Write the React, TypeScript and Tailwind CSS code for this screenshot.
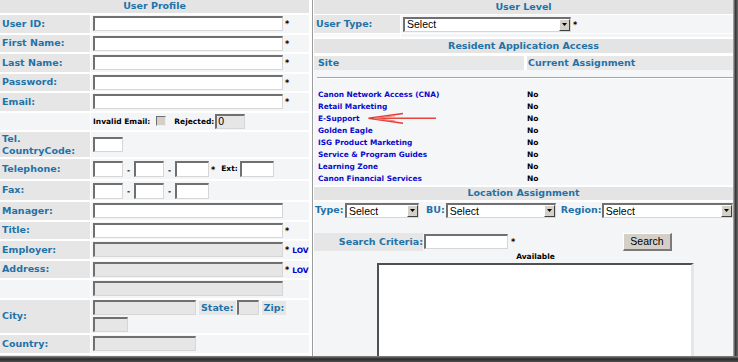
import React from "react";

const lbl = "font-['DejaVu_Sans',Verdana,sans-serif] font-bold text-[9.5px] text-[#1f72a8] whitespace-nowrap";
const sm = "font-['DejaVu_Sans',Verdana,sans-serif] font-bold text-[7.5px] text-black whitespace-nowrap";
const sys = "font-['Liberation_Sans',Arial,sans-serif] text-[10.5px] text-black";
const inset =
  "border-t-2 border-l-2 border-b border-r border-t-[#707070] border-l-[#707070] border-b-[#d6d6d6] border-r-[#d6d6d6]";

function Box({ className = "", gray = false, children }: { className?: string; gray?: boolean; children?: React.ReactNode }) {
  return (
    <div className={`h-[15px] flex-none ${inset} ${gray ? "bg-[#e6e6e6]" : "bg-white"} flex items-center pl-[1px] ${sys} ${className}`}>
      {children}
    </div>
  );
}

function Star({ className = "" }: { className?: string }) {
  return <span className={`${sm} text-[8px] ml-[2px] mt-[3px] ${className}`}>*</span>;
}

function Select({ className = "", text = "Select" }: { className?: string; text?: string }) {
  return (
    <div className={`h-[15px] flex-none ${inset} bg-white flex items-center ${className}`}>
      {text ? <span className={`${sys} pl-[2px] leading-none`}>{text}</span> : null}
      <div className="ml-auto h-full w-[11px] bg-[#d4d0c8] border-t border-l border-t-white border-l-white border-b border-r border-b-[#404040] border-r-[#404040] flex items-center justify-center">
        <svg width="5" height="3" viewBox="0 0 5 3">
          <path d="M0 0H5L2.5 3Z" fill="#000" />
        </svg>
      </div>
    </div>
  );
}

function Header({ children, className = "" }: { children: React.ReactNode; className?: string }) {
  return (
    <div className={`flex-none bg-[#e4e4e4] flex items-center justify-center ${lbl} ${className}`}>{children}</div>
  );
}

function Row({
  label,
  children,
  h = "h-[17.5px]",
  labelClass = "",
  valueClass = "",
  grayLabel,
}: {
  label?: React.ReactNode;
  children?: React.ReactNode;
  h?: string;
  labelClass?: string;
  valueClass?: string;
  grayLabel?: boolean;
}) {
  const gray = grayLabel ?? !!label;
  return (
    <div className={`flex flex-none ${h}`}>
      <div
        className={`w-[90px] flex-none ${gray ? "bg-[#e6e6e6]" : "bg-[#f4f5f7]"} flex items-center pl-[2px] ${lbl} ${labelClass}`}
      >
        {label}
      </div>
      <div className={`flex-1 ml-[1px] bg-[#f4f5f7] flex items-center pl-[2px] ${valueClass}`}>{children}</div>
    </div>
  );
}

function Dash() {
  return <div className={`w-[11px] flex-none text-center ${sm} mt-[3px]`}>-</div>;
}

function Lov() {
  return (
    <>
      <Star />
      <span className="font-['DejaVu_Sans',Verdana,sans-serif] font-bold text-[7.5px] text-[#0000cc] ml-[3px] mt-[2px]">LOV</span>
    </>
  );
}

function LeftPanel() {
  return (
    <div className="w-[309px] flex-none flex flex-col gap-[2px]">
      <Header className="h-[13px]">User Profile</Header>
      <Row label="User ID:">
        <Box className="w-[190px]" />
        <Star />
      </Row>
      <Row label="First Name:">
        <Box className="w-[190px]" />
        <Star />
      </Row>
      <Row label="Last Name:">
        <Box className="w-[190px]" />
        <Star />
      </Row>
      <Row label="Password:">
        <Box className="w-[190px]" />
        <Star />
      </Row>
      <Row label="Email:">
        <Box className="w-[190px]" />
        <Star />
      </Row>
      <Row>
        <span className={sm}>Invalid Email:</span>
        <div className="ml-[6px] w-[10px] h-[10px] flex-none bg-[#d4d0c8] border-t border-l border-t-[#707070] border-l-[#707070] border-b border-r border-b-[#eeeeee] border-r-[#eeeeee]" />
        <span className={`${sm} ml-[8px]`}>Rejected:</span>
        <Box gray className="w-[30px] ml-[1px]">0</Box>
      </Row>
      <Row label={<span>Tel.<br />CountryCode:</span>} h="h-[25px]" labelClass="leading-[11.5px]">
        <Box className="w-[30px]" />
      </Row>
      <Row label="Telephone:" h="h-[20px]">
        <Box className="w-[30px] h-[16px]" />
        <Dash />
        <Box className="w-[30px] h-[16px]" />
        <Dash />
        <Box className="w-[34px] h-[16px]" />
        <Star />
        <span className={`${sm} ml-[6px]`}>Ext:</span>
        <Box className="w-[34px] h-[16px] ml-[2px]" />
      </Row>
      <Row label="Fax:" h="h-[19px]">
        <Box className="w-[30px] h-[16px]" />
        <Dash />
        <Box className="w-[30px] h-[16px]" />
        <Dash />
        <Box className="w-[34px] h-[16px]" />
      </Row>
      <Row label="Manager:">
        <Box className="w-[190px]" />
      </Row>
      <Row label="Title:">
        <Box className="w-[190px]" />
        <Star />
      </Row>
      <Row label="Employer:">
        <Box gray className="w-[190px]" />
        <Lov />
      </Row>
      <Row label="Address:">
        <Box gray className="w-[190px]" />
        <Lov />
      </Row>
      <Row>
        <Box gray className="w-[190px]" />
      </Row>
      <Row label="City:" h="h-[33.5px]" valueClass="!flex-col !items-start justify-center gap-[2px]">
        <div className="flex items-center">
          <Box gray className="w-[103px]" />
          <div className={`ml-[3px] h-[14px] bg-[#e6e6e6] flex items-center px-[2px] ${lbl}`}>State:</div>
          <Box gray className="w-[22px] ml-[1px]" />
          <div className={`ml-[3px] h-[14px] bg-[#e6e6e6] flex items-center px-[2px] ${lbl}`}>Zip:</div>
        </div>
        <Box gray className="w-[35px]" />
      </Row>
      <Row label="Country:">
        <Box gray className="w-[103px]" />
      </Row>
      <Row grayLabel valueClass="!items-start pt-[2px]">
        <Select className="w-[59px]" text="" />
      </Row>
    </div>
  );
}

const sites = [
  "Canon Network Access (CNA)",
  "Retail Marketing",
  "E-Support",
  "Golden Eagle",
  "ISG Product Marketing",
  "Service & Program Guides",
  "Learning Zone",
  "Canon Financial Services",
];

function RightPanel() {
  return (
    <div className="flex-1 flex flex-col pl-[1px] bg-white min-w-0">
      <Header className="h-[13.5px]">User Level</Header>
      <div className="flex flex-none h-[18px] mt-[1.5px]">
        <div className={`w-[86px] flex-none bg-[#e6e6e6] flex items-center pl-[2px] ${lbl}`}>User Type:</div>
        <div className="flex-1 ml-[1px] bg-[#f4f5f7] flex items-center pl-[2px]">
          <Select className="w-[168px]" />
          <Star />
        </div>
      </div>
      <div className="flex flex-none h-[3px] mt-[1.3px]">
        <div className="w-[86px] flex-none bg-[#f9f9fa]" />
        <div className="flex-1 ml-[1px] bg-[#f4f5f7]" />
      </div>
      <Header className="h-[14px] mt-[2px]">Resident Application Access</Header>
      <div className="flex flex-none h-[14px] mt-[2.7px] gap-[3px]">
        <div className={`w-[210px] flex-none bg-[#e8e8e8] flex items-center pl-[4px] ${lbl}`}>Site</div>
        <div className={`flex-1 bg-[#e8e8e8] flex items-center pl-[1px] ${lbl}`}>Current Assignment</div>
      </div>
      <div className="flex-none h-[114.7px] bg-[#f5f6f8] flex flex-col">
        <div className="mt-[7.3px] ml-[3px] h-[2px] border-t border-t-[#a5a5a5] border-b border-b-white" />
        <div className="mt-[9.4px] flex flex-col">
          {sites.map((s) => (
            <div key={s} className="flex h-[12px] items-center">
              <div className="w-[213px] flex-none pl-[4px] font-['DejaVu_Sans',Verdana,sans-serif] font-bold text-[7.4px] text-[#0a0acc] whitespace-nowrap">
                {s}
              </div>
              <div className={sm}>No</div>
            </div>
          ))}
        </div>
      </div>
      <Header className="h-[13.5px] mt-[2px]">Location Assignment</Header>
      <div className="flex-none h-[17px] mt-[1.8px] bg-[#f4f5f7] flex items-center pl-[1px]">
        <span className={lbl}>Type:</span>
        <Select className="w-[74px] ml-[1.4px]" />
        <span className={`${lbl} ml-[7px]`}>BU:</span>
        <Select className="w-[110px] ml-[1px]" />
        <span className={`${lbl} ml-[5px]`}>Region:</span>
        <Select className="flex-1 !flex-auto" />
      </div>
      <div className="flex-none h-[14px] bg-[#f4f5f7]" />
      <div className="flex-none h-[18px] bg-[#f4f5f7] flex items-center">
        <div className={`w-[109px] h-full flex-none bg-[#e6e6e6] flex items-center justify-end ${lbl}`}>Search Criteria:</div>
        <div className="w-[200px] flex-none flex items-center pl-[1px]">
          <Box className="w-[84px]" />
          <Star className="ml-[3px]" />
        </div>
        <div
          className={`w-[49px] h-[18px] flex-none bg-[#d4d0c8] border-t border-l border-t-white border-l-white border-b-2 border-r-2 border-b-[#7a7a7a] border-r-[#7a7a7a] flex items-center justify-center ${sys}`}
        >
          Search
        </div>
      </div>
      <div className="flex-1 bg-[#f4f5f7] flex flex-col">
        <div className="ml-[63px] w-[317px] flex flex-col items-center flex-1">
          <div className={`${sm} h-[12px] flex items-center`}>Available</div>
          <div className="w-full flex-1 bg-white border-t-2 border-l-2 border-t-[#505050] border-l-[#505050] border-r-[3px] border-r-[#e6e6e6]" />
        </div>
      </div>
    </div>
  );
}

function Arrow() {
  return (
    <svg className="absolute left-[360px] top-[108px]" width="82" height="20" viewBox="360 108 82 20">
      <path d="M436 118.2H372" stroke="#e8453c" strokeWidth="1.5" fill="none" />
      <path d="M403 113.4L368.5 118.3L403 123.2" stroke="#e43b33" strokeWidth="1.5" fill="none" strokeLinejoin="miter" />
      <path d="M395 115.6L374 118.3L395 121" stroke="#ee7a74" strokeWidth="1.2" fill="none" />
    </svg>
  );
}

export default function App() {
  return (
    <div className="w-[738px] h-[362px] overflow-hidden bg-white flex flex-col relative">
      <div className="flex h-[356px] flex-none overflow-hidden">
        <LeftPanel />
        <div className="w-[3px] flex-none" />
        <div className="w-px flex-none bg-[#9c9c9c]" />
        <RightPanel />
        <div className="w-[5px] flex-none bg-linear-to-r from-[#b8b8b8] via-[#3a3a3a] to-[#6a6a6a]" />
      </div>
      <div className="h-[6px] flex-none bg-linear-to-b from-[#8a8a8a] via-[#2a2a2a] to-[#505050]" />
      <Arrow />
    </div>
  );
}
